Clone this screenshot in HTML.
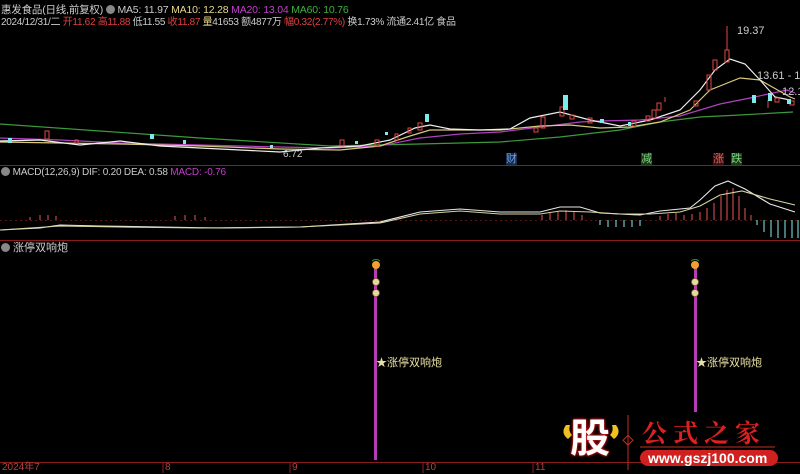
<!DOCTYPE html>
<html><head><meta charset="utf-8"><style>
html,body{margin:0;padding:0;background:#000;}
body{width:800px;height:473px;overflow:hidden;position:relative;font-family:"Liberation Sans","Noto Sans CJK SC",sans-serif;}
.t{position:absolute;font-size:11px;white-space:nowrap;line-height:12px;color:#ccc;}
.h{font-size:10px;letter-spacing:-0.2px;}
</style></head><body>
<svg width="800" height="473" style="position:absolute;left:0;top:0" xmlns="http://www.w3.org/2000/svg">
<line x1="0" y1="165.5" x2="800" y2="165.5" stroke="#8a1c1c" stroke-width="1"/>
<line x1="0" y1="240.5" x2="800" y2="240.5" stroke="#8a1c1c" stroke-width="1"/>
<line x1="0" y1="462.5" x2="800" y2="462.5" stroke="#8a1c1c" stroke-width="1"/>
<line x1="0" y1="220.5" x2="800" y2="220.5" stroke="#5a1414" stroke-width="1" stroke-dasharray="2,3"/>
<g stroke="#8a2020">
<line x1="163" y1="462" x2="163" y2="473"/><line x1="290" y1="462" x2="290" y2="473"/>
<line x1="423" y1="462" x2="423" y2="473"/><line x1="533" y1="462" x2="533" y2="473"/>
</g>
<polyline fill="none" stroke="#3c9a3c" stroke-width="1.2" points="0,124 100,131 200,138 330,146 420,144 500,142 560,137 620,130 660,122 700,117 740,115 793,112"/>
<polyline fill="none" stroke="#b040c0" stroke-width="1.2" points="0,138 60,140 120,143 200,145 280,147 330,148 380,146 420,138 460,134 500,132 540,127 580,122 600,121 640,120 680,116 700,110 720,104 750,98 787,90 795,93"/>
<polyline fill="none" stroke="#d8c87a" stroke-width="1.2" points="0,142 60,143 120,144 200,146 280,149 340,150 380,146 410,136 430,130 460,130 500,130 540,126 570,125 600,128 630,127 660,122 690,110 710,90 740,78 760,80 790,97 795,99"/>
<polyline fill="none" stroke="#eeeeee" stroke-width="1.2" points="0,141 40,140 80,145 120,141 160,146 200,148 240,150 280,152 320,148 360,146 390,140 415,128 430,125 450,129 480,130 510,129 530,118 560,112 590,120 620,126 650,120 680,110 700,90 715,70 730,59 745,64 760,80 775,97 790,100"/>
<g fill="none" stroke="#e04848" stroke-width="1">
<rect x="45" y="131" width="4" height="8"/><rect x="75" y="140" width="3" height="3"/><rect x="340" y="140" width="4" height="6"/>
<rect x="375" y="140" width="4" height="6"/><rect x="395" y="134" width="3" height="6"/><rect x="408" y="128" width="3" height="5"/>
<rect x="418" y="123" width="4" height="7"/><rect x="534" y="128" width="4" height="4"/><rect x="541" y="117" width="4" height="11"/>
<rect x="560" y="107" width="4" height="9"/><rect x="570" y="115" width="4" height="4"/><rect x="588" y="118" width="4" height="5"/>
<rect x="632" y="121" width="4" height="5"/><rect x="646" y="116" width="4" height="5"/><rect x="652" y="110" width="4" height="8"/>
<rect x="657" y="103" width="4" height="7"/><rect x="694" y="101" width="4" height="5"/><rect x="707" y="75" width="4" height="15"/>
<rect x="713" y="60" width="4" height="10"/><rect x="725" y="50" width="4" height="12"/><rect x="775" y="98" width="4" height="4"/>
<rect x="790" y="101" width="4" height="4"/>
</g>
<g stroke="#e04848"><line x1="727" y1="26" x2="727" y2="50"/><line x1="768" y1="100" x2="768" y2="108"/><line x1="665" y1="97" x2="665" y2="102"/></g>
<g fill="#7fe8e8">
<rect x="8" y="138" width="4" height="5"/><rect x="150" y="134" width="4" height="5"/><rect x="183" y="140" width="3" height="4"/>
<rect x="355" y="141" width="3" height="3"/><rect x="385" y="132" width="3" height="3"/><rect x="425" y="114" width="4" height="8"/>
<rect x="563" y="95" width="5" height="15"/><rect x="600" y="119" width="4" height="4"/><rect x="628" y="122" width="3" height="4"/>
<rect x="752" y="95" width="4" height="8"/><rect x="768" y="93" width="4" height="8"/><rect x="787" y="99" width="4" height="5"/>
<rect x="270" y="145" width="3" height="3"/>
</g>
<g stroke="#c04848" stroke-width="1.2">
<line x1="30" y1="220" x2="30" y2="217"/><line x1="40" y1="220" x2="40" y2="215"/><line x1="48" y1="220" x2="48" y2="215"/><line x1="56" y1="220" x2="56" y2="216"/>
<line x1="175" y1="220" x2="175" y2="216"/><line x1="185" y1="220" x2="185" y2="215"/><line x1="195" y1="220" x2="195" y2="215"/><line x1="205" y1="220" x2="205" y2="217"/>
<line x1="542" y1="220" x2="542" y2="215"/><line x1="550" y1="220" x2="550" y2="213"/><line x1="558" y1="220" x2="558" y2="211"/><line x1="566" y1="220" x2="566" y2="210"/><line x1="574" y1="220" x2="574" y2="212"/><line x1="582" y1="220" x2="582" y2="215"/>
<line x1="660" y1="220" x2="660" y2="216"/><line x1="668" y1="220" x2="668" y2="214"/><line x1="676" y1="220" x2="676" y2="213"/><line x1="684" y1="220" x2="684" y2="215"/><line x1="692" y1="220" x2="692" y2="214"/><line x1="700" y1="220" x2="700" y2="212"/><line x1="707" y1="220" x2="707" y2="208"/><line x1="714" y1="220" x2="714" y2="203"/><line x1="721" y1="220" x2="721" y2="196"/><line x1="727" y1="220" x2="727" y2="190"/><line x1="733" y1="220" x2="733" y2="188"/><line x1="739" y1="220" x2="739" y2="196"/><line x1="745" y1="220" x2="745" y2="208"/><line x1="751" y1="220" x2="751" y2="215"/>
</g>
<g stroke="#70c8c8" stroke-width="1.2">
<line x1="600" y1="220" x2="600" y2="225"/><line x1="608" y1="220" x2="608" y2="227"/><line x1="616" y1="220" x2="616" y2="227"/><line x1="624" y1="220" x2="624" y2="227"/><line x1="632" y1="220" x2="632" y2="227"/><line x1="640" y1="220" x2="640" y2="226"/>
<line x1="757" y1="220" x2="757" y2="225"/><line x1="764" y1="220" x2="764" y2="232"/><line x1="771" y1="220" x2="771" y2="237"/><line x1="778" y1="220" x2="778" y2="238"/><line x1="785" y1="220" x2="785" y2="238"/><line x1="792" y1="220" x2="792" y2="238"/><line x1="798" y1="220" x2="798" y2="238"/>
</g>
<polyline fill="none" stroke="#e8e8e8" stroke-width="1.1" points="0,230 40,228 60,225 100,226 160,227 220,228 300,227 380,222 420,212 460,209 500,212 540,212 560,207 580,207 600,213 640,215 660,211 690,208 700,200 715,186 728,181 745,189 770,204 795,212"/>
<polyline fill="none" stroke="#d8d4a0" stroke-width="1.1" points="0,230 60,226 120,227 200,228 300,227 380,223 420,214 460,211 500,214 540,214 560,211 590,212 620,214 650,214 680,212 700,206 720,195 742,191 770,199 795,205"/>
<line x1="375.5" y1="268" x2="375.5" y2="460" stroke="#b43cb4" stroke-width="3"/>
<line x1="695.5" y1="268" x2="695.5" y2="412" stroke="#b43cb4" stroke-width="3"/>
<g>
<circle cx="376" cy="265" r="4" fill="#f0a030"/><path d="M372,261 q4,-3 8,0" stroke="#4a8a2a" fill="none"/>
<circle cx="376" cy="282" r="3.5" fill="#e8d8a0" stroke="#806030" stroke-width="0.8"/><circle cx="376" cy="293" r="3.5" fill="#e8d8a0" stroke="#806030" stroke-width="0.8"/>
<circle cx="695" cy="265" r="4" fill="#f0a030"/><path d="M691,261 q4,-3 8,0" stroke="#4a8a2a" fill="none"/>
<circle cx="695" cy="282" r="3.5" fill="#e8d8a0" stroke="#806030" stroke-width="0.8"/><circle cx="695" cy="293" r="3.5" fill="#e8d8a0" stroke="#806030" stroke-width="0.8"/>
</g>
<path d="M566,425 q-6,8 2,14 l4,-4 q-4,-4 -2,-10z" fill="#f0c020"/>
<path d="M616,425 q6,8 -2,14 l-4,-4 q4,-4 2,-10z" fill="#f0c020"/>
<line x1="628" y1="415" x2="628" y2="470" stroke="#c03020"/>
<rect x="624" y="437" width="7" height="7" transform="rotate(45 628 441)" fill="none" stroke="#c03020"/>
<line x1="640" y1="447" x2="775" y2="447" stroke="#c03020"/>
<rect x="640" y="450" width="138" height="16" rx="8" fill="#d02020"/>
</svg>
<div class="t h" style="left:1px;top:4px;font-size:10.5px"><span>惠发食品(日线,前复权)</span> <span style="display:inline-block;width:9px;height:9px;border-radius:50%;background:#888;vertical-align:-1px"></span> <span>MA5: 11.97</span> <span style="color:#e8d890">MA10: 12.28</span> <span style="color:#c040c8">MA20: 13.04</span> <span style="color:#40b040">MA60: 10.76</span></div>
<div class="t h" style="left:1px;top:17px;letter-spacing:-0.3px">2024/12/31/二 <span style="color:#e04040">开11.62</span> <span style="color:#e04040">高11.88</span> 低11.55 <span style="color:#e04040">收11.87</span> <span style="color:#e8d890">量</span>41653 额4877万 <span style="color:#e04040">幅0.32(2.77%)</span> 换1.73% 流通2.41亿 食品</div>
<div class="t" style="left:737px;top:25px">19.37</div>
<div class="t" style="left:757px;top:70px">13.61 - 13.59</div>
<div class="t" style="left:782px;top:86px">12.1</div>
<div class="t" style="left:283px;top:149px;font-size:10px">6.72</div>
<div class="t" style="left:506px;top:153px;color:#6aa0e0;background:#1a2a4a">财</div>
<div class="t" style="left:641px;top:153px;color:#80d080;background:#1a3a1a">减</div>
<div class="t" style="left:713px;top:153px;color:#e06060;background:#3a1010">涨</div>
<div class="t" style="left:731px;top:153px;color:#80d080;background:#1a3a1a">跌</div>
<div class="t h" style="left:1px;top:167px"><span style="display:inline-block;width:9px;height:9px;border-radius:50%;background:#888;vertical-align:-1px"></span> MACD(12,26,9) DIF: 0.20 DEA: 0.58 <span style="color:#c040c8">MACD: -0.76</span></div>
<div class="t" style="left:1px;top:242px"><span style="display:inline-block;width:9px;height:9px;border-radius:50%;background:#888;vertical-align:-1px"></span> 涨停双响炮</div>
<div class="t" style="left:376px;top:357px;color:#e8e0a0">★涨停双响炮</div>
<div class="t" style="left:696px;top:357px;color:#e8e0a0">★涨停双响炮</div>
<div class="t" style="left:2px;top:462px;color:#b84040;font-size:10px">2024年7</div>
<div class="t" style="left:165px;top:462px;color:#b84040;font-size:10px">8</div>
<div class="t" style="left:292px;top:462px;color:#b84040;font-size:10px">9</div>
<div class="t" style="left:425px;top:462px;color:#b84040;font-size:10px">10</div>
<div class="t" style="left:535px;top:462px;color:#b84040;font-size:10px">11</div>
<div class="t" style="left:570px;top:416px;font-size:40px;line-height:46px;font-weight:bold;color:#fff;text-shadow:0 0 3px #e02020,0 0 2px #e02020">股</div>
<div class="t" style="left:642px;top:418px;font-size:25px;line-height:28px;font-weight:bold;color:#e02020;letter-spacing:6px;font-family:'Noto Serif CJK SC',serif">公式之家</div>
<div class="t" style="left:648px;top:451px;font-size:14px;line-height:15px;font-weight:bold;color:#fff">www.gszj100.com</div>
</body></html>
